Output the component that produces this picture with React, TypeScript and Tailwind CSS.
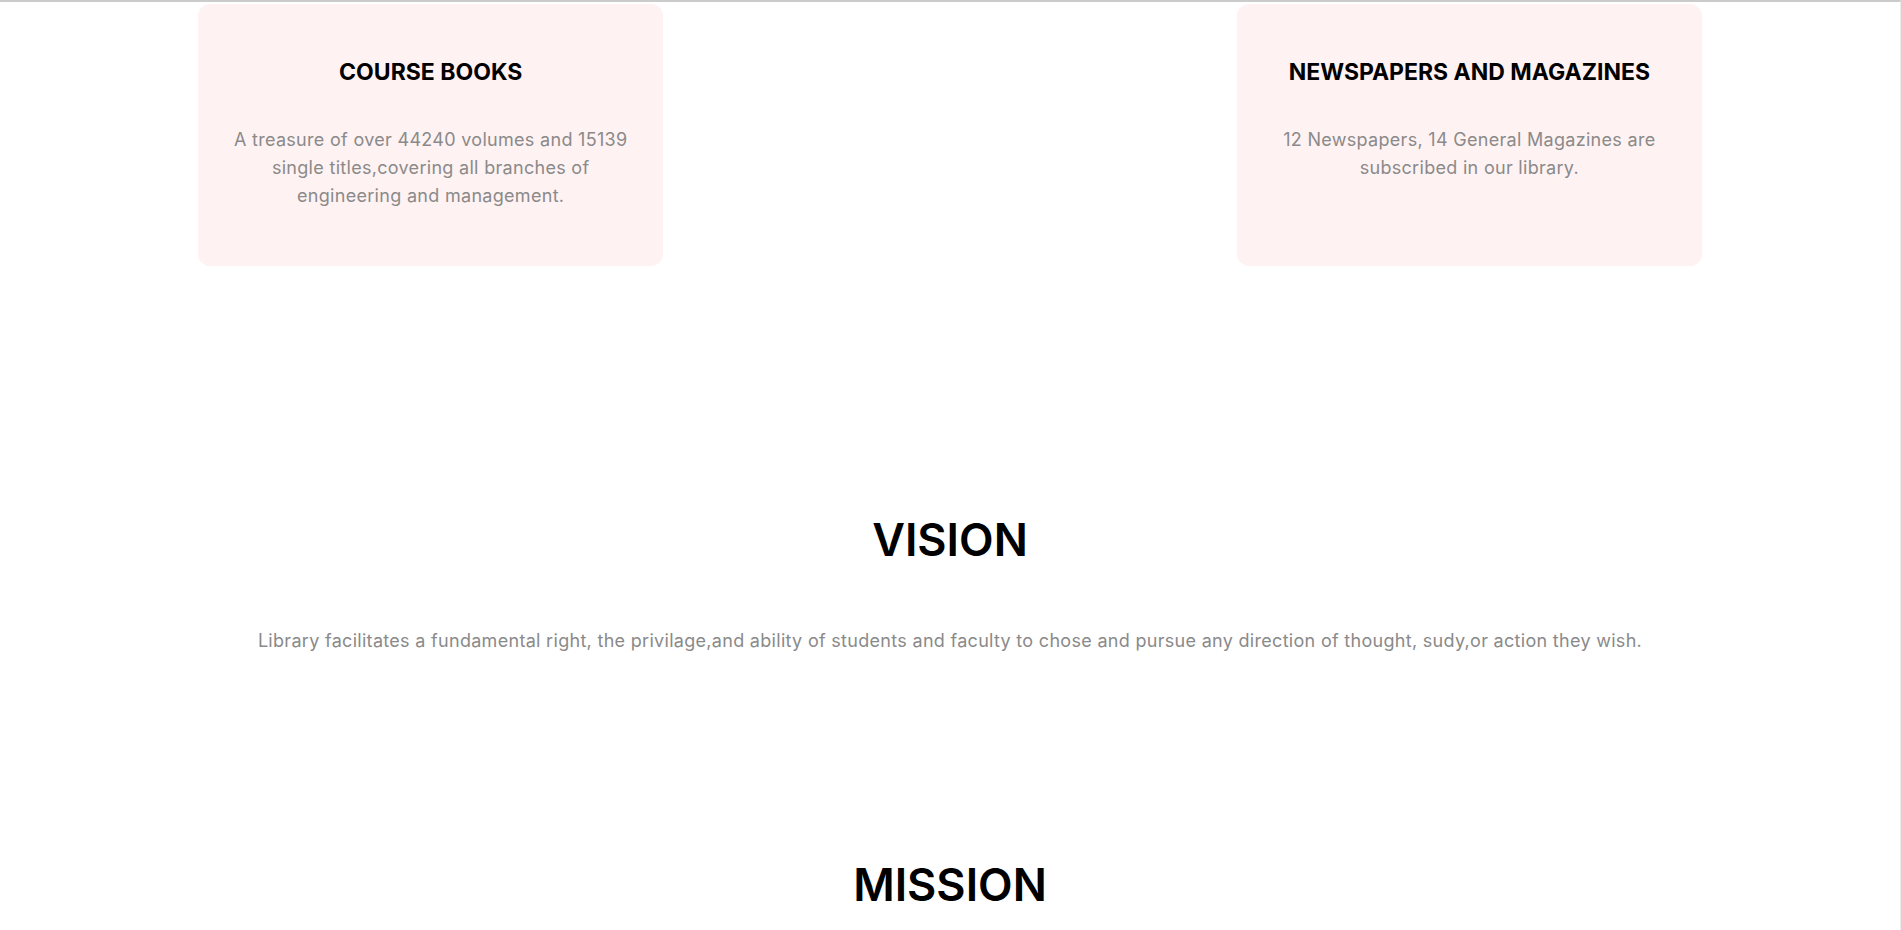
import React from 'react';

interface Resource {
    title: string;
    text: string;
}

const resources: (Resource | null)[] = [
    {
        title: 'COURSE BOOKS',
        text: 'A treasure of over 44240 volumes and 15139 single titles,covering all branches of engineering and management.',
    },
    null,
    {
        title: 'NEWSPAPERS AND MAGAZINES',
        text: '12 Newspapers, 14 General Magazines are subscribed in our library.',
    },
];

const ResourceCard: React.FC<{ item: Resource | null }> = ({ item }) => {
    if (!item) return <div />;
    return (
        <div className="h-[262px] rounded-xl bg-[#fff2f2] px-[30px] pt-[52px] text-center">
            <h3 className="text-[23px] font-bold leading-8 text-black">{item.title}</h3>
            <p className="mt-[38px] text-[18px] leading-7 tracking-[0.3px] text-[#8a8a8a]">{item.text}</p>
        </div>
    );
};

const Section: React.FC<{ title: string; children?: React.ReactNode }> = ({ title, children }) => (
    <section className="text-center">
        <h2 className="text-[45px] font-semibold leading-[56px] text-black">{title}</h2>
        {children}
    </section>
);

export default function App() {
    return (
        <div className="min-h-[930px] border-t-2 border-r border-t-[#cbcbcb] border-r-[#ececec] bg-white font-['Inter',sans-serif]">
            <div className="mx-auto w-[1504px] pt-[2px]">
                <div className="grid grid-cols-3 gap-[54px]">
                    {resources.map((r, i) => <ResourceCard key={i} item={r} />)}
                </div>
            </div>

            <div className="mt-[246px]">
                <Section title="VISION">
                    <p className="mt-[59px] text-[18px] leading-7 tracking-[0.3px] text-[#8a8a8a]">
                        Library facilitates a fundamental right, the privilage,and ability of students and faculty to chose and pursue any direction of thought, sudy,or action they wish.
                    </p>
                </Section>
            </div>

            <div className="mt-[202px]">
                <Section title="MISSION" />
            </div>
        </div>
    );
}
